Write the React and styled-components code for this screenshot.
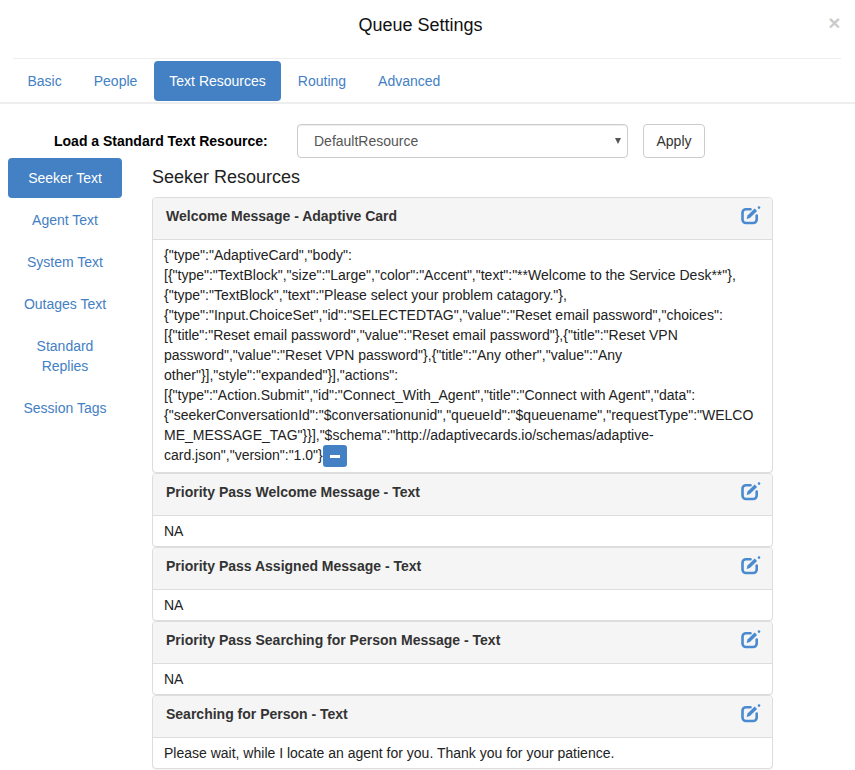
import styled, { createGlobalStyle } from 'styled-components';

const GlobalStyle = createGlobalStyle`
  html, body {
    margin: 0;
    padding: 0;
    background: #fff;
    font-family: 'Liberation Sans', Arial, sans-serif;
    font-size: 14px;
    line-height: 20px;
    color: #333;
  }
  * { box-sizing: border-box; }
`;

const Page = styled.div`
  width: 855px;
  height: 770px;
  overflow: hidden;
`;

const Header = styled.header`
  display: flex;
  align-items: flex-start;
  height: 59px;
  margin: 0 14px 0 13px;
  padding-top: 15px;
  border-bottom: 1px solid #eee;
`;

const Title = styled.h4`
  flex: 1;
  margin: 0;
  font-size: 18px;
  font-weight: 400;
  line-height: 20px;
  text-align: center;
  color: #111;
`;

const Close = styled.button`
  width: 13px;
  margin: -3px 0 0 0;
  padding: 0;
  border: 0;
  background: none;
  font-family: inherit;
  font-size: 21px;
  font-weight: 700;
  line-height: 21px;
  color: #000;
  opacity: 0.2;
`;

const Tabs = styled.nav`
  display: flex;
  gap: 2px;
  height: 45px;
  padding: 2px 0 0 12.5px;
  border-bottom: 2px solid #eee;
`;

const Tab = styled.a`
  height: 40px;
  padding: 10px 15px;
  border-radius: 4px;
  color: ${(p) => (p.$active ? '#fff' : '#4380c4')};
  background: ${(p) => (p.$active ? '#4380c4' : 'transparent')};
`;

const LoadRow = styled.div`
  display: flex;
  align-items: center;
  height: 34px;
  margin-top: 20px;
  padding-left: 54px;
`;

const LoadLabel = styled.label`
  width: 243px;
  font-weight: 700;
  color: #000;
`;

const SelectWrap = styled.div`
  position: relative;
  width: 331px;
  height: 34px;
  margin-right: 15px;

  &::after {
    content: '';
    position: absolute;
    top: 14px;
    right: 7px;
    border-style: solid;
    border-width: 6px 3px 0;
    border-color: #555 transparent transparent;
  }
`;

const Select = styled.div`
  height: 34px;
  padding: 6px 16px;
  border: 1px solid #ccc;
  border-radius: 4px;
  box-shadow: inset 0 1px 1px rgba(0, 0, 0, 0.075);
  color: #555;
`;

const ApplyButton = styled.button`
  width: 62px;
  height: 34px;
  padding: 0;
  border: 1px solid #ccc;
  border-radius: 4px;
  background: #fff;
  font-family: inherit;
  font-size: 14px;
  color: #333;
`;

const Main = styled.div`
  display: flex;
  gap: 30px;
  padding-left: 8px;
`;

const SideNav = styled.nav`
  display: flex;
  flex-direction: column;
  gap: 2px;
  width: 114px;
`;

const SideItem = styled.a`
  padding: 10px 15px;
  border-radius: 4px;
  text-align: center;
  color: ${(p) => (p.$active ? '#fff' : '#4380c4')};
  background: ${(p) => (p.$active ? '#4380c4' : 'transparent')};
`;

const Content = styled.section`
  width: 621px;
`;

const Heading = styled.h4`
  margin: 9px 0 10px;
  font-size: 18px;
  font-weight: 400;
  line-height: 20px;
  color: #222;
`;

const Panel = styled.article`
  border: 1px solid #ddd;
  border-radius: 4px;
  background: #fff;
  box-shadow: 0 1px 1px rgba(0, 0, 0, 0.05);
`;

const PanelHead = styled.div`
  display: flex;
  justify-content: space-between;
  height: 42px;
  padding: 8px 11px 0 13px;
  border-bottom: 1px solid #ddd;
  border-radius: 3px 3px 0 0;
  background: #f5f5f5;
`;

const PanelTitle = styled.h5`
  margin: 0;
  font-size: 14px;
  font-weight: 700;
  line-height: 20px;
  color: #333;
`;

const PanelBody = styled.div`
  padding: 5px 10px 5px 11px;
  color: #222;
  word-break: break-word;
`;

const Collapse = styled.button`
  display: inline-flex;
  align-items: center;
  justify-content: center;
  width: 24px;
  height: 22px;
  padding: 0;
  border: 0;
  border-radius: 3px;
  background: #4380c4;
  vertical-align: middle;

  &::before {
    content: '';
    width: 10px;
    height: 3px;
    background: #fff;
  }
`;

function EditIcon() {
  return (
    <svg width="20" height="19" viewBox="0 0 20 19" fill="none">
      <path
        d="M9.5 3.2H5A3.5 3.5 0 0 0 1.5 6.7v6.8A3.5 3.5 0 0 0 5 17h7.2a3.5 3.5 0 0 0 3.5-3.5V9.5"
        stroke="#4a8ad0"
        strokeWidth="2.6"
        strokeLinecap="round"
      />
      <path d="M5.6 12.9l.9-3.3 7.2-7.1 2.4 2.4-7.2 7.1z" fill="#4a8ad0" />
      <circle cx="18" cy="1.6" r="1.3" fill="#4a8ad0" />
    </svg>
  );
}

const tabs = ['Basic', 'People', 'Text Resources', 'Routing', 'Advanced'];
const sideItems = ['Seeker Text', 'Agent Text', 'System Text', 'Outages Text', 'Standard Replies', 'Session Tags'];

const cardJson =
  '{"type":"AdaptiveCard","body":[{"type":"TextBlock","size":"Large","color":"Accent","text":"**Welcome to the Service Desk**"},{"type":"TextBlock","text":"Please select your problem catagory."},{"type":"Input.ChoiceSet","id":"SELECTEDTAG","value":"Reset email password","choices":[{"title":"Reset email password","value":"Reset email password"},{"title":"Reset VPN password","value":"Reset VPN password"},{"title":"Any other","value":"Any other"}],"style":"expanded"}],"actions":[{"type":"Action.Submit","id":"Connect_With_Agent","title":"Connect with Agent","data":{"seekerConversationId":"$conversationunid","queueId":"$queuename","requestType":"WELCOME_MESSAGE_TAG"}}],"$schema":"http://adaptivecards.io/schemas/adaptive-card.json","version":"1.0"}';

const resources = [
  { title: 'Priority Pass Welcome Message - Text', body: 'NA' },
  { title: 'Priority Pass Assigned Message - Text', body: 'NA' },
  { title: 'Priority Pass Searching for Person Message - Text', body: 'NA' },
  { title: 'Searching for Person - Text', body: 'Please wait, while I locate an agent for you. Thank you for your patience.' },
];

export default function App() {
  return (
    <Page>
      <GlobalStyle />
      <Header>
        <Title>Queue Settings</Title>
        <Close aria-label="Close">×</Close>
      </Header>
      <Tabs>
        {tabs.map((t) => (
          <Tab key={t} $active={t === 'Text Resources'}>{t}</Tab>
        ))}
      </Tabs>
      <LoadRow>
        <LoadLabel>Load a Standard Text Resource:</LoadLabel>
        <SelectWrap>
          <Select>DefaultResource</Select>
        </SelectWrap>
        <ApplyButton>Apply</ApplyButton>
      </LoadRow>
      <Main>
        <SideNav>
          {sideItems.map((s) => (
            <SideItem key={s} $active={s === 'Seeker Text'}>{s}</SideItem>
          ))}
        </SideNav>
        <Content>
          <Heading>Seeker Resources</Heading>
          <Panel>
            <PanelHead>
              <PanelTitle>Welcome Message - Adaptive Card</PanelTitle>
              <EditIcon />
            </PanelHead>
            <PanelBody>
              {cardJson}
              <Collapse aria-label="Collapse" />
            </PanelBody>
          </Panel>
          {resources.map((r) => (
            <Panel key={r.title}>
              <PanelHead>
                <PanelTitle>{r.title}</PanelTitle>
                <EditIcon />
              </PanelHead>
              <PanelBody>{r.body}</PanelBody>
            </Panel>
          ))}
        </Content>
      </Main>
    </Page>
  );
}
